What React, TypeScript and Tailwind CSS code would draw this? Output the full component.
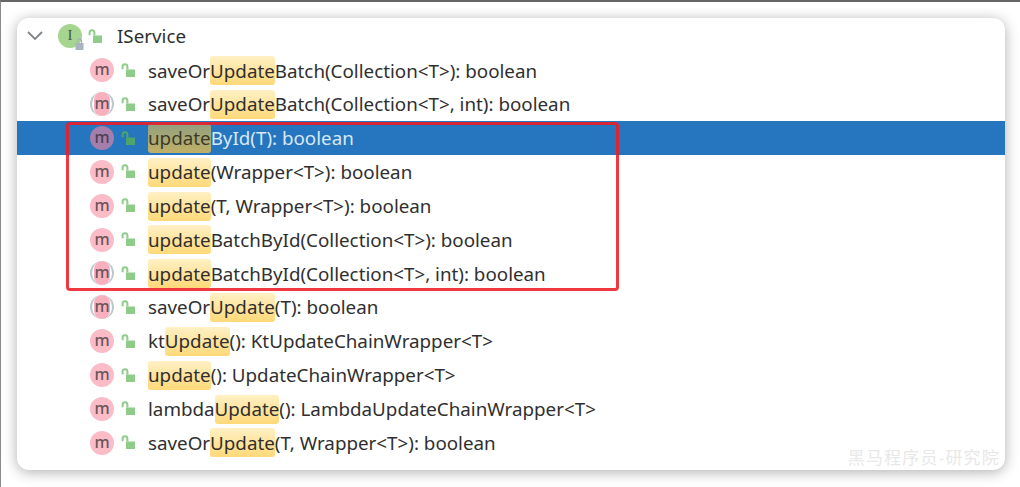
import React from "react";

type Row = {
  before?: string;
  match: string;
  after: string;
  kind?: "plain" | "implemented";
  selected?: boolean;
};

const rows: Row[] = [
  { before: "saveOr", match: "Update", after: "Batch(Collection<T>): boolean" },
  { before: "saveOr", match: "Update", after: "Batch(Collection<T>, int): boolean", kind: "implemented" },
  { match: "update", after: "ById(T): boolean", selected: true },
  { match: "update", after: "(Wrapper<T>): boolean" },
  { match: "update", after: "(T, Wrapper<T>): boolean" },
  { match: "update", after: "BatchById(Collection<T>): boolean" },
  { match: "update", after: "BatchById(Collection<T>, int): boolean", kind: "implemented" },
  { before: "saveOr", match: "Update", after: "(T): boolean", kind: "implemented" },
  { before: "kt", match: "Update", after: "(): KtUpdateChainWrapper<T>" },
  { match: "update", after: "(): UpdateChainWrapper<T>" },
  { before: "lambda", match: "Update", after: "(): LambdaUpdateChainWrapper<T>" },
  { before: "saveOr", match: "Update", after: "(T, Wrapper<T>): boolean" },
];

function Lock({ selected }: { selected?: boolean }) {
  const color = selected ? "#4ea56b" : "#8fcc8a";
  return (
    <svg width="15" height="15" viewBox="0 0 15 15" className="shrink-0">
      <rect x="5" y="6.5" width="9" height="7.5" fill={color} />
      <path d="M1.6 6.2V3.6C1.6 2.2 2.7 1.2 4 1.2S6.4 2.2 6.4 3.6V6.5" fill="none" stroke={color} strokeWidth="2" />
    </svg>
  );
}

function MethodIcon({ kind, selected }: { kind?: Row["kind"]; selected?: boolean }) {
  if (kind === "implemented") {
    return (
      <div className="mt-[1px] flex h-6 w-6 shrink-0 items-center justify-center rounded-full border-x-[2px] border-[#bcc6cd] bg-white">
        <div className="flex h-6 w-[16px] items-center justify-center rounded-[8px] bg-[#f9b0be] pb-[2px] text-[16px] leading-none font-medium text-[#6a5559]">
          m
        </div>
      </div>
    );
  }
  return (
    <div
      className={`mt-[1px] flex h-6 w-6 shrink-0 items-center justify-center rounded-full pb-[2px] text-[16px] leading-none font-medium ${
        selected ? "bg-[#a47fab] text-[#4f3f55]" : "bg-[#fbbcc8] text-[#6a5559]"
      }`}
    >
      m
    </div>
  );
}

function MethodRow({ row }: { row: Row }) {
  return (
    <div className={`flex h-[33.85px] items-center pl-[73px] ${row.selected ? "bg-[#2675bf] text-[#d7e8f7]" : "text-[#2f2f2f]"}`}>
      <MethodIcon kind={row.kind} selected={row.selected} />
      <div className="mt-[1px] ml-[7px]">
        <Lock selected={row.selected} />
      </div>
      <div className="ml-[12px] flex h-full items-center pt-[1.5px] text-[18.8px] whitespace-pre">
        {row.before}
        <span
          className={`flex h-[29px] items-center rounded-[3px] ${
            row.selected ? "bg-gradient-to-b from-[#93a07e] to-[#bfb066] text-[#3a3a2c]" : "bg-gradient-to-b from-[#fff0c4] to-[#ffd978]"
          }`}
        >
          {row.match}
        </span>
        {row.after}
      </div>
    </div>
  );
}

export default function App() {
  return (
    <div className="h-[487px] w-[1020px] overflow-hidden border-t-2 border-l border-t-[#666666] border-l-[#8a8a8a] bg-white pt-[16px] pl-[16px] [font-family:'Noto_Sans','Noto_Sans_CJK_SC',sans-serif]">
      <div className="relative h-[452px] w-[988px] rounded-[12px] bg-white shadow-[0_2px_14px_rgba(0,0,0,0.32)]">
        <div className="flex h-[35px] items-center pt-[1px] text-[18.8px] text-[#2f2f2f]">
          <svg width="18" height="12" viewBox="0 0 18 12" className="ml-[9px] shrink-0">
            <path d="M2 2l7 7 7-7" fill="none" stroke="#7f8387" strokeWidth="1.8" />
          </svg>
          <div className="relative ml-[14px] flex h-6 w-6 shrink-0 items-center justify-center rounded-full bg-[#a5d58f] pb-[2px] text-[15px] font-medium text-[#4a5a44] [font-family:'Liberation_Serif',serif]">
            I
            <svg width="9" height="12" viewBox="0 0 9 12" className="absolute -right-[2px] -bottom-[2px]">
              <rect x="0.5" y="5" width="8" height="7" fill="#a9b4c0" />
              <path d="M2.5 5V3.2C2.5 2 3.4 1 4.5 1S6.5 2 6.5 3.2V5" fill="none" stroke="#a9b4c0" strokeWidth="1.3" />
            </svg>
          </div>
          <div className="ml-[6px]">
            <Lock />
          </div>
          <span className="ml-[14px]">IService</span>
        </div>
        {rows.map((row, index) => (
          <MethodRow key={index} row={row} />
        ))}

        <div className="absolute top-[104px] left-[49px] h-[169px] w-[553px] rounded-[4px] border-[3px] border-[#ee1c25e0]" />
        <div className="absolute right-[5px] bottom-[0px] text-[17px] tracking-[1.2px] text-[#e8e8e8]">黑马程序员-研究院</div>
      </div>
    </div>
  );
}
